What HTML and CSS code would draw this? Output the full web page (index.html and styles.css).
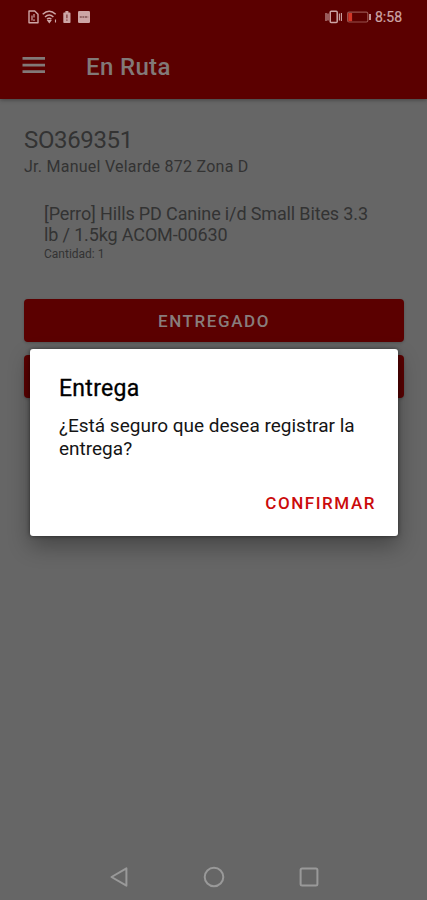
FILE: index.html
```html
<!DOCTYPE html>
<html lang="es">
<head>
<meta charset="utf-8">
<title>En Ruta</title>
<link rel="stylesheet" href="styles.css">
</head>
<body>
<div class="screen">
  <header class="header">
    <div class="status">
      <svg class="status-left" width="64" height="16" viewBox="0 0 64 16" fill="none" stroke="currentColor">
        <path d="M2 2h5.700l3.300 3.300v8.500H2z" stroke-width="1.400" stroke-linejoin="round"/>
        <path d="M7 5v3.600M7 10.200v1.800M5 6.500v5" stroke-width="1.200"/>
        <path d="M15.700 5.300q6.500-6 13 0M18 8q4.200-4 8.400 0M20 10.300q2.200-2 4.400 0" stroke-width="1.500"/>
        <path d="M20.800 11.500h3l-1.500 2zM28.500 10.500v3" fill="currentColor" stroke-width="1.100"/>
        <path d="M38.400 2h3v1.500h1.300q.8 0 .8.800v8.900q0 .8-.8.800h-5.600q-.8 0-.8-.8V4.300q0-.8.8-.8h1.300z" fill="currentColor" stroke="none"/>
        <path d="M39.900 5.500v3.800M39.900 10.400v1.300" stroke="#7b3535" stroke-width="1.200"/>
        <rect x="51" y="2" width="12" height="12" rx="1.300" fill="currentColor" stroke="none"/>
        <path d="M52.800 8h8.400" stroke="#805050" stroke-width="1.600" stroke-dasharray="2 .6"/>
      </svg>
      <div class="status-right">
        <svg width="47" height="16" viewBox="0 0 47 16" fill="none" stroke="currentColor">
          <rect x="5.200" y="2.200" width="7" height="11.200" rx="1" stroke-width="1.500"/>
          <path d="M3 4.500v7M14.400 4.500v7M1 4v8M16.400 4v8" stroke-width="1.100"/>
          <rect x="22.600" y="3.200" width="20.200" height="9.800" rx="1.500" stroke="#98514d" stroke-width="1.200"/>
          <path d="M45 5v6" stroke-width="1.800"/>
          <rect x="23.300" y="4" width="3.800" height="8.200" fill="#cf3527" stroke="none"/>
        </svg>
        <span class="clock">8:58</span>
      </div>
    </div>
    <div class="appbar">
      <svg class="menu" width="24" height="18" viewBox="0 0 24 18" stroke="currentColor" stroke-width="2.800"><path d="M.5 2.400h22.500M.5 9.100h22.500M.5 15.700h22.500"/></svg>
      <h1 class="title">En Ruta</h1>
    </div>
  </header>
  <main class="content">
    <h2 class="order">SO369351</h2>
    <p class="address">Jr. Manuel Velarde 872 Zona D</p>
    <section class="item">
      <p class="product"><span class="line">[Perro] Hills PD Canine i/d Small Bites 3.3</span> <span class="line">lb / 1.5kg ACOM-00630</span></p>
      <p class="quantity">Cantidad: 1</p>
    </section>
    <button class="button">ENTREGADO</button>
    <button class="button"></button>
  </main>
  <nav class="navbar">
    <svg width="22" height="22" viewBox="0 0 22 22"><path d="M18.400 2.300v17.400L3.500 11z"/></svg>
    <svg width="22" height="22" viewBox="0 0 22 22"><circle cx="11" cy="11" r="9.300"/></svg>
    <svg width="22" height="22" viewBox="0 0 22 22"><rect x="2.600" y="2.600" width="16.800" height="16.800" rx="1.500"/></svg>
  </nav>
  <div class="dialog" role="dialog">
    <h2 class="dialog-title">Entrega</h2>
    <p class="dialog-text"><span class="line">¿Está seguro que desea registrar la</span> <span class="line">entrega?</span></p>
    <div class="actions"><button class="confirm">CONFIRMAR</button></div>
  </div>
</div>
</body>
</html>
```

FILE: styles.css
```css
* { box-sizing: border-box; }
body { margin: 0; font-family: Roboto, sans-serif; background: #666; }
h1, h2, p { margin: 0; font-weight: 400; }
button { border: 0; padding: 0; font-family: inherit; }
.screen { position: relative; width: 427px; height: 900px; overflow: hidden; background: #666; color: #333; display: flex; flex-direction: column; }
.header { height: 99px; background: #5b0000; box-shadow: 0 1px 4px rgba(0,0,0,.35); flex: none; }
.status { height: 34px; padding: 9px 24px 0 27px; display: flex; justify-content: space-between; color: #cda5a5; }
.status-right { display: flex; gap: 3px; }
.clock { font-size: 14px; line-height: 16px; width: 28px; white-space: nowrap; -webkit-text-stroke: .2px currentColor; }
.appbar { height: 65px; display: flex; align-items: center; padding: 0 22px; gap: 40px; color: #827978; }
.menu { margin-top: -3px; }
.title { font-size: 24px; line-height: 30px; font-weight: 500; letter-spacing: .35px; }
.content { padding: 26px 23px 0 24px; flex: 1; display: flex; flex-direction: column; }
.order { font-size: 24px; line-height: 30px; letter-spacing: -.35px; }
.address { font-size: 16px; line-height: 22px; letter-spacing: .25px; margin-top: 1px; }
.item { padding: 26px 20px 0; height: 121px; }
.line { display: block; white-space: nowrap; }
.product { font-size: 18px; line-height: 20.500px; letter-spacing: -.14px; }
.quantity { font-size: 12px; line-height: 15px; margin-top: 2px; }
.button { height: 43px; flex: none; margin-bottom: 13px; border-radius: 4px; background: #5b0000; color: #887d7c; font-size: 17px; font-weight: 500; letter-spacing: 1.600px; box-shadow: 0 1px 3px rgba(0,0,0,.2); }
.navbar { height: 46px; display: flex; justify-content: center; align-items: center; gap: 73px; fill: none; stroke: #999; stroke-width: 2; stroke-linejoin: round; }
.dialog { position: absolute; left: 30px; top: 349px; width: 368px; height: 187px; padding: 25px 22px 0 29px; background: #fff; border-radius: 3px; color: #151515; box-shadow: 0 10px 22px rgba(0,0,0,.32), 0 0 4px rgba(0,0,0,.5); }
.dialog-title { font-size: 23px; line-height: 30px; letter-spacing: .3px; color: #000; -webkit-text-stroke: .3px currentColor; }
.dialog-text { font-size: 19px; line-height: 22.500px; margin-top: 11px; }
.actions { display: flex; justify-content: flex-end; margin-top: 31px; }
.confirm { background: none; color: #cb0b0b; font-size: 17px; line-height: 24px; font-weight: 500; letter-spacing: 1.550px; }
```
